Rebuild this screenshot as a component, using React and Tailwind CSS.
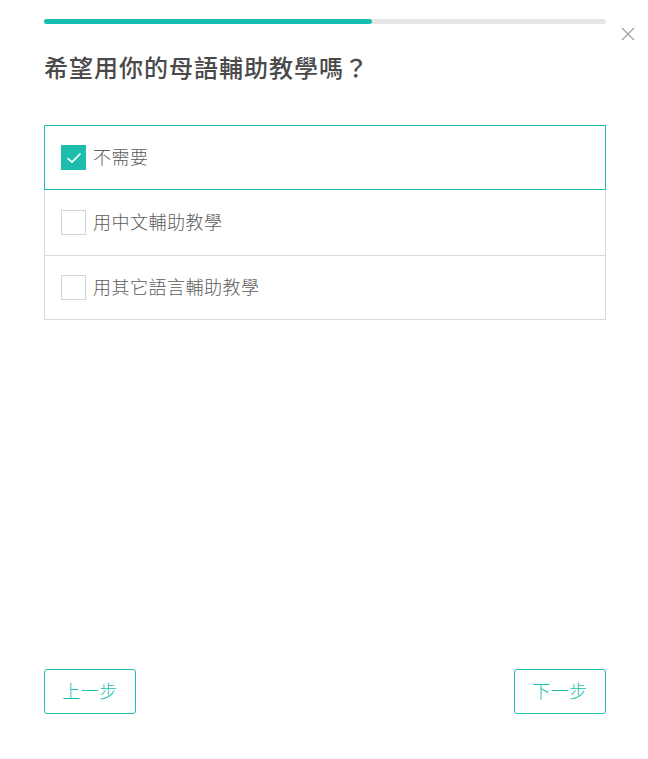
import React, { useState } from 'react';

const options = ['不需要', '用中文輔助教學', '用其它語言輔助教學'];
const heights = ['h-[65px]', 'h-[66px] border-t-0', 'h-[64px] border-t-0'];

const Check = () => (
    <svg width="18" height="18" viewBox="0 0 18 18" fill="none">
        <path d="M3 9.5 L7 13.2 L15 5" stroke="white" strokeWidth="1.7" strokeLinecap="round" strokeLinejoin="round" />
    </svg>
);

const App = () => {
    const [selected, setSelected] = useState(0);

    return (
        <div
            className="relative min-h-screen w-full bg-white flex flex-col pl-[44px] pr-[42px] pb-[45px]"
            style={{ fontFamily: '"Noto Sans", "Noto Sans CJK TC", sans-serif' }}
        >
            {/* progress */}
            <div className="mt-[19px] h-[5px] w-full rounded-full bg-[#e6e6e6]">
                <div className="h-full w-[58.4%] rounded-full bg-[#16bfad]" />
            </div>

            <button className="absolute top-[27px] right-[13px] text-[#a0a0a0]">
                <svg width="14" height="14" viewBox="0 0 14 14" fill="none">
                    <path d="M1 1 L13 13 M13 1 L1 13" stroke="currentColor" strokeWidth="1.2" />
                </svg>
            </button>

            <h1 className="mt-[28px] text-[24px] leading-[32px] font-medium tracking-[1px] text-[#4a4a4a]">
                希望用你的母語輔助教學嗎？
            </h1>

            <div className="mt-[41px] flex flex-col">
                {options.map((label, i) => {
                    const active = selected === i;
                    return (
                        <div
                            key={label}
                            onClick={() => setSelected(i)}
                            className={
                                'flex items-center gap-[7px] pl-[16px] cursor-pointer border ' +
                                heights[i] + ' ' +
                                (active ? 'border-[#1dbfae]' : 'border-[#d9d9d9]')
                            }
                        >
                            {active ? (
                                <span className="flex h-[25px] w-[25px] items-center justify-center bg-[#1cbdac]">
                                    <Check />
                                </span>
                            ) : (
                                <span className="h-[25px] w-[25px] border border-[#d4d4d4] bg-white" />
                            )}
                            <span className="text-[18px] font-light tracking-[0.5px] text-[#5c5c5c]">{label}</span>
                        </div>
                    );
                })}
            </div>

            <div className="mt-auto flex justify-between">
                <button className="h-[45px] w-[92px] rounded-[3px] border border-[#1dbfae] text-[18px] font-light tracking-[0.5px] text-[#1dbfae]">
                    上一步
                </button>
                <button className="h-[45px] w-[92px] rounded-[3px] border border-[#1dbfae] text-[18px] font-light tracking-[0.5px] text-[#1dbfae]">
                    下一步
                </button>
            </div>
        </div>
    );
};

export default App;
